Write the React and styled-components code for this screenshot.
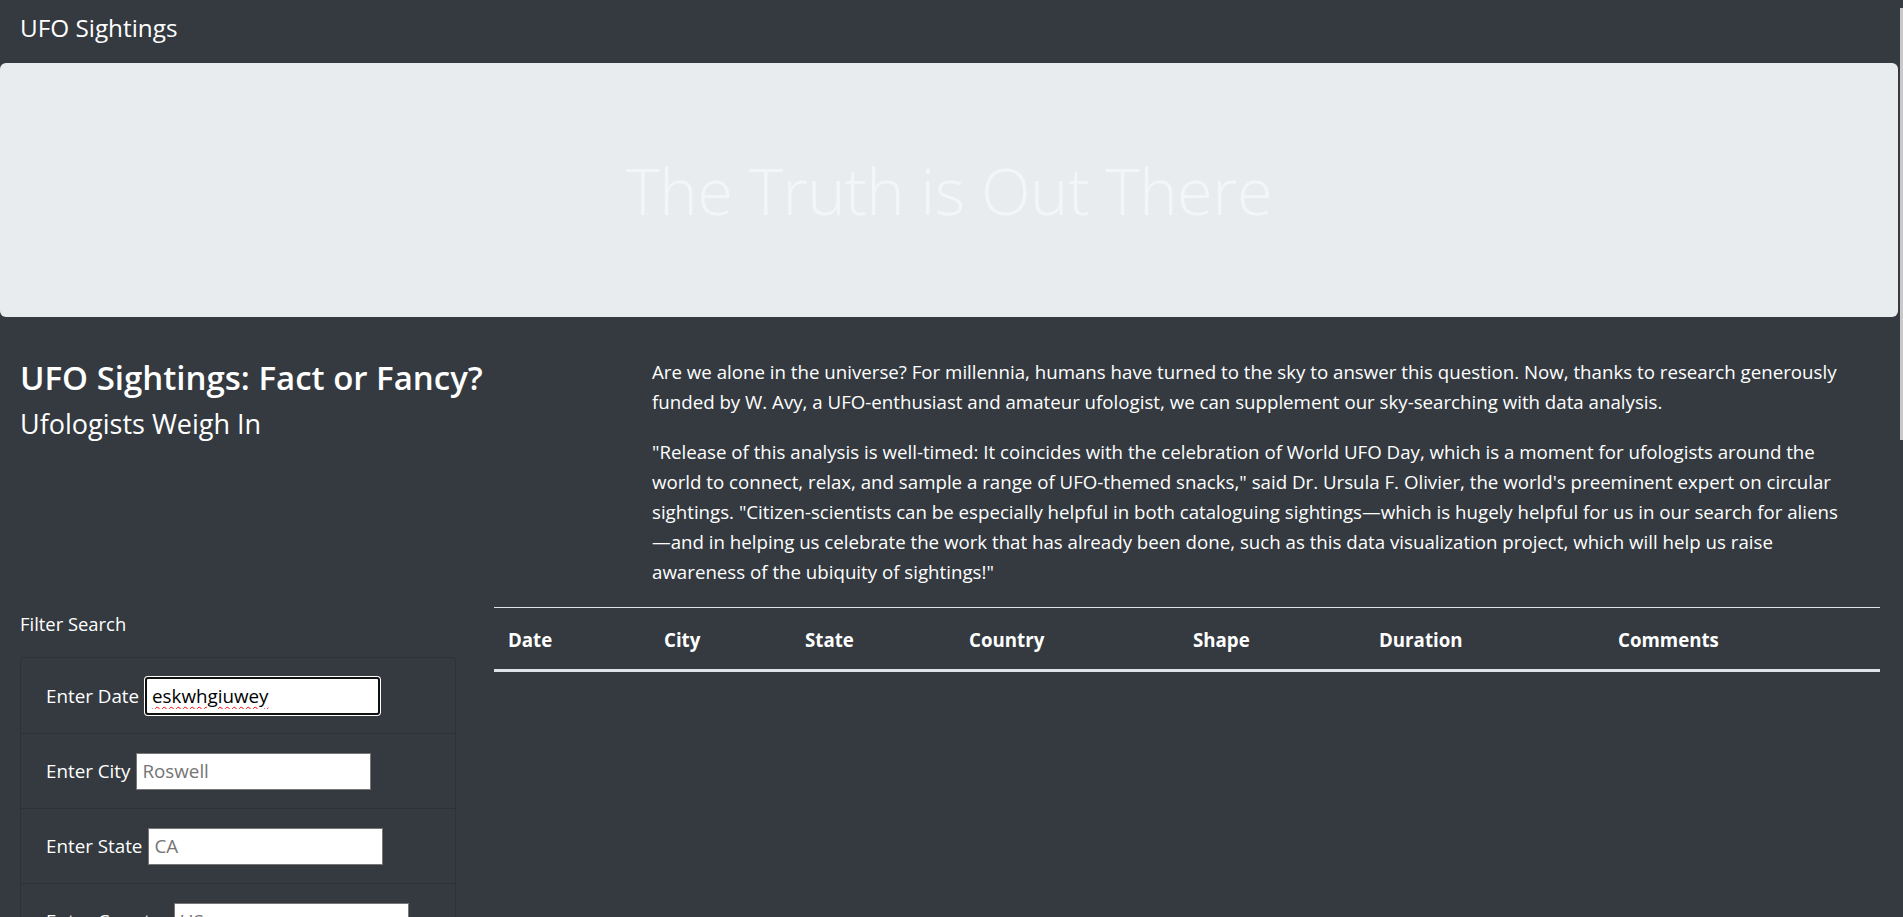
import React from "react";
import styled, { createGlobalStyle } from "styled-components";

const Global = createGlobalStyle`
  html, body {
    margin: 0;
    padding: 0;
    background: #343a40;
    color: #ffffff;
    font-family: "Segoe UI", "Open Sans", "Noto Sans", sans-serif;
  }
  * { box-sizing: border-box; }
`;

const Page = styled.div`
  min-height: 917px;
  background: #343a40;
`;

const Navbar = styled.nav`
  height: 63px;
  display: flex;
  align-items: center;
  padding: 0 20px 6px;
`;

const Brand = styled.a`
  font-size: 24.3px;
  color: #fff;
  text-decoration: none;
  line-height: 1;
`;

const Jumbotron = styled.header`
  height: 254px;
  margin-right: 5px;
  background: #e9ecef;
  border-radius: 6px;
  display: flex;
  align-items: center;
  justify-content: center;
`;

const Display = styled.h1`
  margin: 0;
  font-weight: 300;
  font-size: 65px;
  color: #f4f5f7;
  letter-spacing: -0.5px;
`;

const Section = styled.section`
  display: grid;
  grid-template-columns: ${(p) => p.$cols};
  padding: ${(p) => p.$pad};
  padding-left: 20px;
`;

const Title = styled.h2`
  margin: 0 0 6px;
  font-size: 33px;
  font-weight: 600;
  line-height: 1.3;
`;

const Subtitle = styled.h3`
  margin: 0;
  font-size: 27px;
  font-weight: 400;
  line-height: 1.3;
`;

const Prose = styled.div`
  padding-top: 0;
`;

const Para = styled.p`
  margin: 0 0 20px;
  font-size: 18.7px;
  line-height: 30px;
`;

const FilterCol = styled.div`
  padding-top: 2px;
`;

const FilterTitle = styled.h5`
  margin: 0 0 19px;
  font-size: 18.4px;
  font-weight: 400;
  line-height: 29px;
`;

const Card = styled.ul`
  list-style: none;
  margin: 0;
  padding: 0;
  width: 436px;
  border: 1px solid rgba(0, 0, 0, 0.13);
  border-radius: 4px;
`;

const FilterRow = styled.li`
  height: 75px;
  display: flex;
  align-items: center;
  padding: 0 0 0 25px;
  border-top: ${(p) => (p.$first ? "none" : "1px solid rgba(0,0,0,0.13)")};
`;

const Label = styled.label`
  font-size: 18.8px;
  color: #fff;
  margin-right: 6px;
  white-space: nowrap;
`;

const Input = styled.input`
  width: 235px;
  height: ${(p) => (p.$focused ? "38px" : "37px")};
  padding: 0 5px;
  font-family: inherit;
  font-size: 18.8px;
  color: #000;
  background: #fff;
  border: ${(p) => (p.$focused ? "2px solid #101010" : "1px solid #767676")};
  border-radius: ${(p) => (p.$focused ? "3px" : "0")};
  box-shadow: ${(p) => (p.$focused ? "0 0 0 1px #ffffff" : "none")};
  outline: none;
  text-decoration: ${(p) => (p.$focused ? "underline wavy #ff0000" : "none")};
  text-decoration-thickness: 1px;
  text-underline-offset: 3px;
  &::placeholder {
    color: #757575;
  }
`;

const Table = styled.table`
  width: 100%;
  border-collapse: collapse;
`;

const Th = styled.th`
  width: ${(p) => p.$w}px;
  text-align: left;
  font-size: 18.7px;
  font-weight: 700;
  line-height: 29px;
  padding: 17px 14px 15px;
  border-top: 1px solid #dee2e6;
  border-bottom: 3px solid #dee2e6;
`;

const ScrollEdge = styled.div`
  position: fixed;
  top: 8px;
  right: 0;
  width: 3px;
  height: 432px;
  background: #c9c9c9;
`;

const columns = [
  ["Date", 156],
  ["City", 141],
  ["State", 164],
  ["Country", 224],
  ["Shape", 186],
  ["Duration", 239],
  ["Comments", 276],
];

const filters = [
  { label: "Enter Date", placeholder: "1/11/2011", value: "eskwhgiuwey", focused: true },
  { label: "Enter City", placeholder: "Roswell" },
  { label: "Enter State", placeholder: "CA" },
  { label: "Enter Country", placeholder: "US" },
  { label: "Enter Shape", placeholder: "circle" },
];

export default function App() {
  return (
    <Page>
      <Global />
      <Navbar>
        <Brand href="#">UFO Sightings</Brand>
      </Navbar>
      <Jumbotron>
        <Display>The Truth is Out There</Display>
      </Jumbotron>
      <Section $cols="632px 1fr" $pad="40px 56px 0 0">
        <div>
          <Title>UFO Sightings: Fact or Fancy?</Title>
          <Subtitle>Ufologists Weigh In</Subtitle>
        </div>
        <Prose>
          <Para>
            Are we alone in the universe? For millennia, humans have turned to the sky to answer this
            question. Now, thanks to research generously funded by W. Avy, a UFO-enthusiast and amateur
            ufologist, we can supplement our sky-searching with data analysis.
          </Para>
          <Para>
            "Release of this analysis is well-timed: It coincides with the celebration of World UFO Day,
            which is a moment for ufologists around the world to connect, relax, and sample a range of
            UFO-themed snacks," said Dr. Ursula F. Olivier, the world's preeminent expert on circular
            sightings. "Citizen-scientists can be especially helpful in both cataloguing sightings—which
            is hugely helpful for us in our search for aliens—and in helping us celebrate the work that
            has already been done, such as this data visualization project, which will help us raise
            awareness of the ubiquity of sightings!"
          </Para>
        </Prose>
      </Section>
      <Section $cols="474px 1fr" $pad="0 23px 0 0">
        <FilterCol>
          <FilterTitle>Filter Search</FilterTitle>
          <Card>
            {filters.map((f, i) => (
              <FilterRow key={f.label} $first={i === 0}>
                <Label>{f.label}</Label>
                <Input
                  $focused={f.focused}
                  placeholder={f.placeholder}
                  defaultValue={f.value}
                  readOnly
                />
              </FilterRow>
            ))}
          </Card>
        </FilterCol>
        <div>
          <Table>
            <thead>
              <tr>
                {columns.map(([c, w]) => (
                  <Th key={c} $w={w}>
                    {c}
                  </Th>
                ))}
              </tr>
            </thead>
            <tbody />
          </Table>
        </div>
      </Section>
      <ScrollEdge />
    </Page>
  );
}
